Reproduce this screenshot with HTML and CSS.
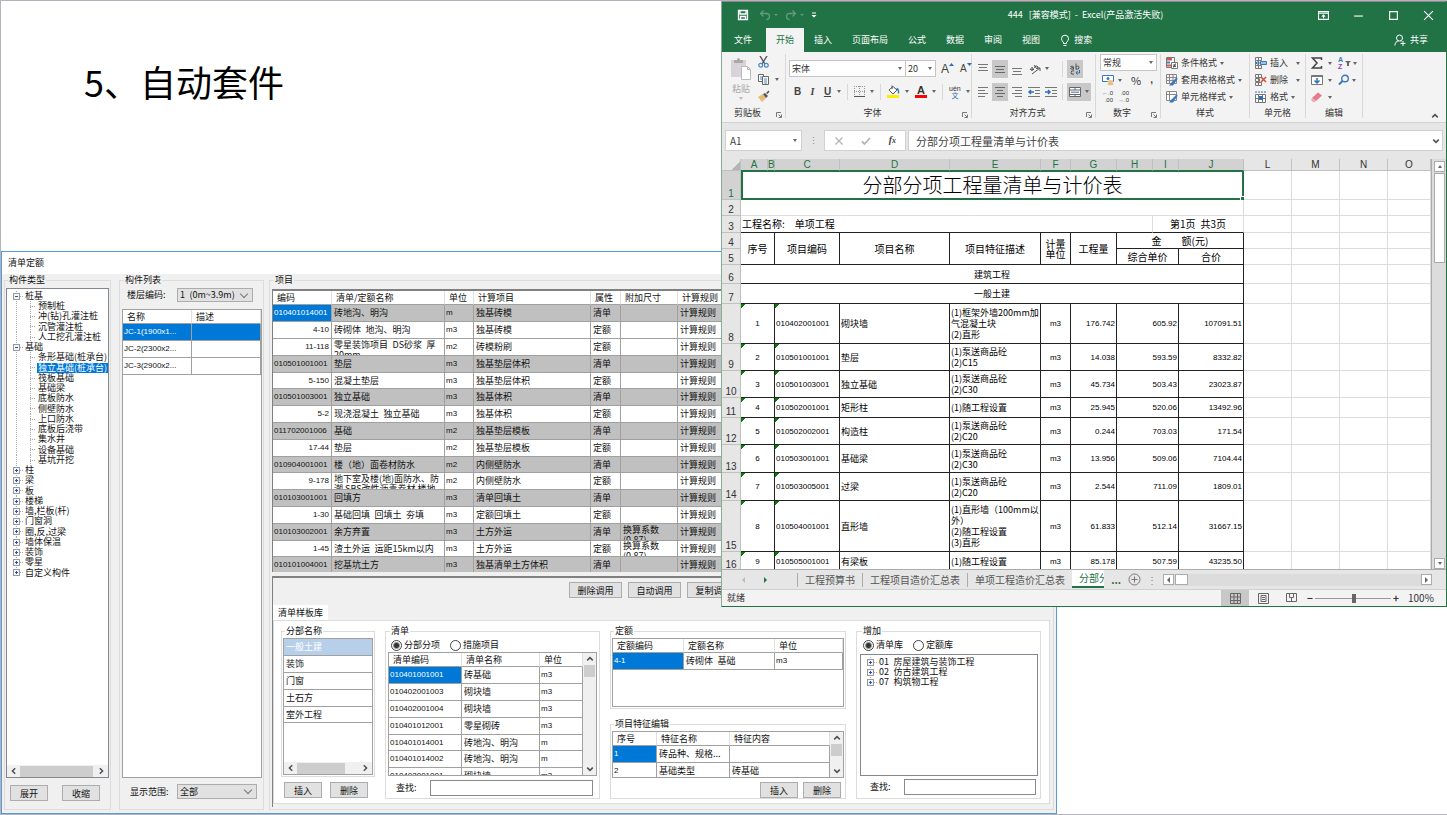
FILE: index.html
```html
<!DOCTYPE html>
<html lang="zh-CN">
<head>
<meta charset="utf-8">
<title>自动套件</title>
<link rel="stylesheet" href="styles.css">
</head>
<body>
<svg class="defs" aria-hidden="true">
  <symbol id="plus" viewBox="0 0 7 7"><rect x=".5" y=".5" width="6" height="6" fill="#f4f4f4" stroke="#9a9a9a"/><path d="M2 3.5h3M3.5 2v3" stroke="#2b50b5"/></symbol>
  <symbol id="minus" viewBox="0 0 7 7"><rect x=".5" y=".5" width="6" height="6" fill="#f4f4f4" stroke="#9a9a9a"/><path d="M2 3.5h3" stroke="#2b50b5"/></symbol>
  <symbol id="chl" viewBox="0 0 8 8"><path d="M5.2 1.2 2.4 4l2.8 2.8" fill="none" stroke="#505050" stroke-width="1.5"/></symbol>
  <symbol id="chr" viewBox="0 0 8 8"><path d="M2.8 1.2 5.6 4 2.8 6.8" fill="none" stroke="#505050" stroke-width="1.5"/></symbol>
  <symbol id="chu" viewBox="0 0 8 8"><path d="M1.2 5.4 4 2.6l2.8 2.8" fill="none" stroke="#505050" stroke-width="1.5"/></symbol>
  <symbol id="chd" viewBox="0 0 8 8"><path d="M1.2 2.6 4 5.4l2.8-2.8" fill="none" stroke="#505050" stroke-width="1.5"/></symbol>
  <symbol id="launch" viewBox="0 0 6 6"><path d="M.5 5V.5H5M2.5 2.5 5 5M5.5 2.5v3h-3" fill="none" stroke="#777"/></symbol>
</svg>
<main class="slide">
<h1 class="headline">5、自动套件</h1>

<section class="dialog">
  <header class="dialog-title">清单定额</header>
  <div class="dialog-body">
    <fieldset class="group g-types">
      <legend>构件类型</legend>
      <div class="treebox grow">
        <ul class="tree">
          <li><svg><use href="#minus"/></svg><span>桩基</span></li>
          <li class="leaf"><span>预制桩</span></li>
          <li class="leaf"><span>冲(钻)孔灌注桩</span></li>
          <li class="leaf"><span>沉管灌注桩</span></li>
          <li class="leaf"><span>人工挖孔灌注桩</span></li>
          <li><svg><use href="#minus"/></svg><span>基础</span></li>
          <li class="leaf"><span>条形基础(桩承台)</span></li>
          <li class="leaf"><span class="on">独立基础(桩承台)</span></li>
          <li class="leaf"><span>筏板基础</span></li>
          <li class="leaf"><span>基础梁</span></li>
          <li class="leaf"><span>底板防水</span></li>
          <li class="leaf"><span>侧壁防水</span></li>
          <li class="leaf"><span>上口防水</span></li>
          <li class="leaf"><span>底板后浇带</span></li>
          <li class="leaf"><span>集水井</span></li>
          <li class="leaf"><span>设备基础</span></li>
          <li class="leaf"><span>基坑开挖</span></li>
          <li><svg><use href="#plus"/></svg><span>柱</span></li>
          <li><svg><use href="#plus"/></svg><span>梁</span></li>
          <li><svg><use href="#plus"/></svg><span>板</span></li>
          <li><svg><use href="#plus"/></svg><span>楼梯</span></li>
          <li><svg><use href="#plus"/></svg><span>墙,栏板(杆)</span></li>
          <li><svg><use href="#plus"/></svg><span>门窗洞</span></li>
          <li><svg><use href="#plus"/></svg><span>圈,反,过梁</span></li>
          <li><svg><use href="#plus"/></svg><span>墙体保温</span></li>
          <li><svg><use href="#plus"/></svg><span>装饰</span></li>
          <li><svg><use href="#plus"/></svg><span>零星</span></li>
          <li class="last"><svg><use href="#plus"/></svg><span>自定义构件</span></li>
        </ul>
        <div class="hbar"><svg><use href="#chl"/></svg><i class="thumb"></i><svg><use href="#chr"/></svg></div>
      </div>
      <div class="btns types-btns"><button>展开</button><button>收缩</button></div>
    </fieldset>

    <fieldset class="group g-list">
      <legend>构件列表</legend>
      <div class="field top"><label for="floor">楼层编码:</label><span class="sel"><select id="floor"><option>1&ensp;(0m~3.9m)</option></select></span></div>
      <div class="box grow">
        <table class="grid parts">
          <colgroup><col class="w69"><col></colgroup>
          <thead><tr><th>名称</th><th>描述</th></tr></thead>
          <tbody>
            <tr class="on"><td class="c">JC-1(1900x1...</td><td></td></tr>
            <tr><td class="c">JC-2(2300x2...</td><td></td></tr>
            <tr><td class="c">JC-3(2900x2...</td><td></td></tr>
          </tbody>
        </table>
      </div>
      <div class="field bottom"><label for="range">显示范围:</label><span class="sel"><select id="range"><option>全部</option></select></span></div>
    </fieldset>

    <fieldset class="group g-items">
      <legend>项目</legend>
      <div class="items">
        <table class="grid quota">
          <colgroup><col class="w59"><col class="w113"><col class="w29"><col class="w117"><col class="w30"><col class="w57"><col></colgroup>
          <thead><tr><th>编码</th><th>清单/定额名称</th><th>单位</th><th>计算项目</th><th>属性</th><th>附加尺寸</th><th>计算规则</th></tr></thead>
          <tbody>
            <tr class="g"><td class="c cur">010401014001</td><td>砖地沟、明沟</td><td class="u">m</td><td>独基砖模</td><td>清单</td><td></td><td>计算规则</td></tr>
            <tr><td class="c r">4-10</td><td>砖砌体&ensp;地沟、明沟</td><td class="u">m3</td><td>独基砖模</td><td>定额</td><td></td><td>计算规则</td></tr>
            <tr><td class="c r">11-118</td><td><div class="clip">零星装饰项目&ensp;DS砂浆&ensp;厚<br>20mm</div></td><td class="u">m2</td><td>砖模粉刷</td><td>定额</td><td></td><td>计算规则</td></tr>
            <tr class="g"><td class="c">010501001001</td><td>垫层</td><td class="u">m3</td><td>独基垫层体积</td><td>清单</td><td></td><td>计算规则</td></tr>
            <tr><td class="c r">5-150</td><td>混凝土垫层</td><td class="u">m3</td><td>独基垫层体积</td><td>定额</td><td></td><td>计算规则</td></tr>
            <tr class="g"><td class="c">010501003001</td><td>独立基础</td><td class="u">m3</td><td>独基体积</td><td>清单</td><td></td><td>计算规则</td></tr>
            <tr><td class="c r">5-2</td><td>现浇混凝土&ensp;独立基础</td><td class="u">m3</td><td>独基体积</td><td>定额</td><td></td><td>计算规则</td></tr>
            <tr class="g"><td class="c">011702001006</td><td>基础</td><td class="u">m2</td><td>独基垫层模板</td><td>清单</td><td></td><td>计算规则</td></tr>
            <tr><td class="c r">17-44</td><td>垫层</td><td class="u">m2</td><td>独基垫层模板</td><td>定额</td><td></td><td>计算规则</td></tr>
            <tr class="g"><td class="c">010904001001</td><td>楼（地）面卷材防水</td><td class="u">m2</td><td>内侧壁防水</td><td>清单</td><td></td><td>计算规则</td></tr>
            <tr><td class="c r">9-178</td><td><div class="clip">地下室及楼(地)面防水、防<br>潮 SBS改性沥青卷材 楼地</div></td><td class="u">m2</td><td>内侧壁防水</td><td>定额</td><td></td><td>计算规则</td></tr>
            <tr class="g"><td class="c">010103001001</td><td>回填方</td><td class="u">m3</td><td>清单回填土</td><td>清单</td><td></td><td>计算规则</td></tr>
            <tr><td class="c r">1-30</td><td>基础回填&ensp;回填土&ensp;夯填</td><td class="u">m3</td><td>定额回填土</td><td>定额</td><td></td><td>计算规则</td></tr>
            <tr class="g"><td class="c">010103002001</td><td>余方弃置</td><td class="u">m3</td><td>土方外运</td><td>清单</td><td><div class="clip">换算系数<br>(0.87)</div></td><td>计算规则</td></tr>
            <tr><td class="c r">1-45</td><td>渣土外运&ensp;运距15km以内</td><td class="u">m3</td><td>土方外运</td><td>定额</td><td><div class="clip">换算系数<br>(0.87)</div></td><td>计算规则</td></tr>
            <tr class="g"><td class="c">010101004001</td><td>挖基坑土方</td><td class="u">m3</td><td>独基清单土方体积</td><td>清单</td><td></td><td>计算规则</td></tr>
          </tbody>
        </table>
      </div>
      <div class="lower">
        <div class="btns calls"><button>删除调用</button><button>自动调用</button><button>复制调用</button></div>
        <div class="tabs"><button class="tab">清单样板库</button></div>
        <div class="page">
          <div class="col">
            <fieldset class="group g-div grow">
              <legend>分部名称</legend>
              <div class="box grow">
                <ul class="rows grow"><li class="on">一般土建</li><li>装饰</li><li>门窗</li><li>土石方</li><li>室外工程</li></ul>
                <div class="hbar"><svg><use href="#chl"/></svg><i class="thumb half"></i><svg><use href="#chr"/></svg></div>
              </div>
            </fieldset>
            <div class="btns div-btns"><button>插入</button><button>删除</button></div>
          </div>
          <fieldset class="group g-bill">
            <legend>清单</legend>
            <div class="radios"><label><input type="radio" name="bill" checked>分部分项</label><label><input type="radio" name="bill">措施项目</label></div>
            <div class="box scroll grow">
              <div class="pane">
                <table class="grid">
                  <colgroup><col class="w73"><col class="w78"><col></colgroup>
                  <thead><tr><th>清单编码</th><th>清单名称</th><th>单位</th></tr></thead>
                  <tbody>
                    <tr><td class="c cur">010401001001</td><td>砖基础</td><td class="u">m3</td></tr>
                    <tr><td class="c">010402001003</td><td>砌块墙</td><td class="u">m3</td></tr>
                    <tr><td class="c">010402001004</td><td>砌块墙</td><td class="u">m3</td></tr>
                    <tr><td class="c">010401012001</td><td>零星砌砖</td><td class="u">m3</td></tr>
                    <tr><td class="c">010401014001</td><td>砖地沟、明沟</td><td class="u">m</td></tr>
                    <tr><td class="c">010401014002</td><td>砖地沟、明沟</td><td class="u">m</td></tr>
                    <tr><td class="c">010402001001</td><td>砌块墙</td><td class="u">m3</td></tr>
                  </tbody>
                </table>
              </div>
              <div class="vbar"><svg><use href="#chu"/></svg><i class="thumb"></i><svg><use href="#chd"/></svg></div>
            </div>
            <div class="field find"><label for="find1">查找:</label><input id="find1" type="text"></div>
          </fieldset>
          <div class="col mid">
            <fieldset class="group g-quota">
              <legend>定额</legend>
              <div class="box grow">
                <table class="grid">
                  <colgroup><col class="w71"><col class="w91"><col></colgroup>
                  <thead><tr><th>定额编码</th><th>定额名称</th><th>单位</th></tr></thead>
                  <tbody><tr><td class="c cur">4-1</td><td>砖砌体&ensp;基础</td><td class="u">m3</td></tr></tbody>
                </table>
              </div>
            </fieldset>
            <fieldset class="group g-feat grow">
              <legend>项目特征编辑</legend>
              <div class="box scroll grow">
                <div class="pane">
                  <table class="grid">
                    <colgroup><col class="w44"><col class="w73"><col></colgroup>
                    <thead><tr><th>序号</th><th>特征名称</th><th>特征内容</th></tr></thead>
                    <tbody>
                      <tr><td class="c cur">1</td><td>砖品种、规格...</td><td></td></tr>
                      <tr><td class="c">2</td><td>基础类型</td><td>砖基础</td></tr>
                    </tbody>
                  </table>
                </div>
                <div class="vbar"><svg><use href="#chu"/></svg><i class="thumb"></i><svg><use href="#chd"/></svg></div>
              </div>
              <div class="btns feat-btns"><button>插入</button><button>删除</button></div>
            </fieldset>
          </div>
          <fieldset class="group g-add">
            <legend>增加</legend>
            <div class="radios"><label><input type="radio" name="lib" checked>清单库</label><label><input type="radio" name="lib">定额库</label></div>
            <div class="treebox grow">
              <ul class="tree">
                <li><svg><use href="#plus"/></svg><span>01&ensp;房屋建筑与装饰工程</span></li>
                <li><svg><use href="#plus"/></svg><span>02&ensp;仿古建筑工程</span></li>
                <li class="last"><svg><use href="#plus"/></svg><span>07&ensp;构筑物工程</span></li>
              </ul>
            </div>
            <div class="field find"><label for="find2">查找:</label><input id="find2" type="text"></div>
          </fieldset>
        </div>
      </div>
    </fieldset>
  </div>
</section>

<section class="excel">
  <header class="xtitle">
    <div class="quick">
      <svg width="12" height="12" viewBox="0 0 12 12"><path d="M1.5 1.5h9v9h-9zM3 1.5v3.5h6V1.5M3.5 10.5V7.5h5v3" fill="none" stroke="#fff" stroke-width="1.3"/></svg>
      <svg class="undo" width="20" height="12" viewBox="0 0 20 12"><path d="M4.5 1.5 1.5 4.5l3 3M1.5 4.5h6q3 0 3 3t-3 3" fill="none" stroke="#5f9c7a" stroke-width="1.3"/><path d="M15 5h4l-2 2z" fill="#5f9c7a"/></svg>
      <svg width="20" height="12" viewBox="0 0 20 12"><path d="M7.500 1.5l3 3-3 3M10.500 4.500h-6q-3 0-3 3t3 3" fill="none" stroke="#5f9c7a" stroke-width="1.3"/><path d="M15 5h4l-2 2z" fill="#5f9c7a"/></svg>
      <svg width="6" height="8" viewBox="0 0 6 8"><path d="M1 2h4" stroke="#fff"/><path d="M.500 4h5L3 6.500z" fill="#fff"/></svg>
    </div>
    <div class="xname">444&nbsp;&nbsp; [兼容模式]&nbsp; -&nbsp; Excel(产品激活失败)</div>
    <div class="winbtns">
      <svg viewBox="0 0 10 10"><path d="M.500 1.500h9v7h-9zM.500 3h9M5 7.500V4.500M3.500 6 5 4.500 6.500 6" fill="none" stroke="#fff"/></svg>
      <svg viewBox="0 0 10 10"><path d="M1 5.500h8" stroke="#fff"/></svg>
      <svg viewBox="0 0 10 10"><path d="M1.500 1.500h7v7h-7z" fill="none" stroke="#fff"/></svg>
      <svg viewBox="0 0 10 10"><path d="m1 1 8 8M9 1 1 9" stroke="#fff"/></svg>
    </div>
  </header>
  <nav class="xtabs">
    <button class="file">文件</button><button class="on">开始</button><button>插入</button><button>页面布局</button><button>公式</button><button>数据</button><button>审阅</button><button>视图</button>
    <button class="search"><svg width="10" height="13" viewBox="0 0 10 13"><path d="M3.500 9.500V8.200Q1.500 7 1.500 4.700a3.500 3.500 0 0 1 7 0Q8.500 7 6.500 8.200v1.300zM3.500 11.500h3" fill="none" stroke="#fff"/></svg>搜索</button>
    <button class="share"><svg width="12" height="12" viewBox="0 0 12 12"><circle cx="5.500" cy="4" r="3" fill="none" stroke="#fff"/><path d="M.800 11.500Q1.500 7 4.500 7M6.500 7l1 .800M9 7v5M6.500 9.500h5" fill="none" stroke="#fff"/></svg>共享</button>
  </nav>

  <div class="ribbon">
    <div class="rg rg-clip">
      <div class="tools clip-tools">
        <div class="paste">
          <svg width="22" height="24" viewBox="0 0 22 24"><path d="M1 3h15v17H1z" fill="#d9d3d9"/><path d="M4 3h3q0-2 1.500-2T10 3h3v3H4z" fill="#a9a9a9"/><path d="M11.500 9.500h6l3 3v10h-9z" fill="#fff" stroke="#bbb"/><path d="M17.500 9.500v3h3" fill="none" stroke="#bbb"/></svg>
          <span>粘贴</span><i class="car dim"></i>
        </div>
        <div class="stack">
          <svg width="11" height="12" viewBox="0 0 11 12"><path d="M2 0l5 8M9 0 4 8" stroke="#555" stroke-width="1.400"/><circle cx="2.700" cy="9.300" r="1.900" fill="none" stroke="#4a86c5" stroke-width="1.200"/><circle cx="8.300" cy="9.300" r="1.900" fill="none" stroke="#4a86c5" stroke-width="1.200"/></svg>
          <span class="ico"><svg width="11" height="12" viewBox="0 0 11 12"><path d="M.500 1.500h5v7h-5z" fill="#fff" stroke="#666"/><path d="M4.500 3.500h6v8h-6z" fill="#fff" stroke="#666"/><path d="M2 4h2M2 6h2M6 6h3M6 8h3M6 10h3" stroke="#4a86c5"/></svg><i class="car"></i></span>
          <svg width="12" height="12" viewBox="0 0 12 12"><path d="M0 7 5 4l3 4-4 4z" fill="#eab878"/><path d="m5 4 2-1 3 3-2 2z" fill="#555"/><path d="m8 3 2.500-2.500 1 1L9.500 4z" fill="#555"/></svg>
        </div>
      </div>
      <div class="rlabel">剪贴板<svg><use href="#launch"/></svg></div>
    </div>
    <div class="rg rg-font">
      <div class="tools two">
        <div class="trow">
          <span class="sel tri fname"><select aria-label="字体"><option>宋体</option></select></span><span class="sel tri fsize"><select aria-label="字号"><option>20</option></select></span>
          <b class="big">A<svg width="5" height="4" viewBox="0 0 5 4"><path d="M0 3h5L2.500 0z" fill="#2f6fb7"/></svg></b>
          <b class="small">A<svg width="5" height="4" viewBox="0 0 5 4"><path d="M0 0h5L2.500 3z" fill="#2f6fb7"/></svg></b>
        </div>
        <div class="trow fonts2">
          <b>B</b><b class="it">I</b><span class="ico"><b class="un">U</b><i class="car"></i></span><i class="vs"></i>
          <span class="ico"><svg width="11" height="11" viewBox="0 0 11 11"><path d="M.500 0v10M5.500 0v10M10.500 0v10M0 .500h11M0 5.500h11" stroke="#999" stroke-dasharray="1 1"/><path d="M0 10.500h11" stroke="#555"/></svg><i class="car"></i></span><i class="vs"></i>
          <span class="ico"><svg width="13" height="13" viewBox="0 0 13 13"><path d="m2 5 4-3.500L10 5 6 9z" fill="#fff" stroke="#555"/><path d="M5 4V.500" stroke="#555"/><path d="M9.500 3.500q2.500.500 2 5" fill="none" stroke="#3b78bd" stroke-width="1.500"/><path d="M0 10h12v3H0z" fill="#ffec00"/></svg><i class="car"></i></span>
          <span class="ico"><span class="acol">A</span><i class="car"></i></span><i class="vs"></i>
          <span class="ico"><span class="pin"><em>uén</em><em class="wen">文</em></span><i class="car"></i></span>
        </div>
      </div>
      <div class="rlabel">字体<svg><use href="#launch"/></svg></div>
    </div>
    <div class="rg rg-align">
      <div class="tools two">
        <div class="trow al">
          <button class="tb"><svg viewBox="0 0 12 12"><path d="M1 1.500h10M2 4.500h8M1 7.500h10" stroke="#777"/></svg></button>
          <button class="tb on"><svg viewBox="0 0 12 12"><path d="M1 3.500h10M2 6.500h8M1 9.500h10" stroke="#666"/></svg></button>
          <button class="tb"><svg viewBox="0 0 12 12"><path d="M1 5.500h10M2 8.500h8M1 11.500h10" stroke="#777"/></svg></button>
          <span class="ico turn"><svg viewBox="0 0 12 12"><path d="M1 7q2-4 3-2t-2 2q2 1 3-1M5 2l3 4q2-2 0-3T5.500 5M3 11l8-6M11 5v3M11 5H8" fill="none" stroke="#555"/></svg><i class="car"></i></span><i class="vs"></i>
          <button class="tb on"><svg viewBox="0 0 12 12"><path d="M1.500 3.500q3-1 3 .500v2.500M4.500 4.500q-3 0-3 1t3 .500M7 .500v6M7 4q3-2 3 .500T7 6M5 8q-3-1-3 1.500T5 11" fill="none" stroke="#555"/><path d="M10.500 7v3H7M8.500 8 7 10l1.500 1.500" fill="none" stroke="#2f6fb7"/></svg></button>
        </div>
        <div class="trow al">
          <button class="tb"><svg viewBox="0 0 12 12"><path d="M1 1.500h10M1 4.500h7M1 7.500h10M1 10.500h7" stroke="#777"/></svg></button>
          <button class="tb on"><svg viewBox="0 0 12 12"><path d="M1 1.500h10M3 4.500h6M1 7.500h10M3 10.500h6" stroke="#666"/></svg></button>
          <button class="tb"><svg viewBox="0 0 12 12"><path d="M1 1.500h10M4 4.500h7M1 7.500h10M4 10.500h7" stroke="#777"/></svg></button>
          <button class="tb"><svg viewBox="0 0 12 12"><path d="M0 1.500h12M7 4.500h5M7 7.500h5M0 10.500h12" stroke="#777"/><path d="M6 6H1M3 4 1 6l2 2" fill="none" stroke="#2f6fb7" stroke-width="1.500"/></svg></button>
          <button class="tb"><svg viewBox="0 0 12 12"><path d="M0 1.500h12M7 4.500h5M7 7.500h5M0 10.500h12" stroke="#777"/><path d="M0 6h5M3 4l2 2-2 2" fill="none" stroke="#2f6fb7" stroke-width="1.500"/></svg></button><i class="vs"></i>
          <button class="tb on wide"><svg viewBox="0 0 12 12"><path d="M.500 1.500h11v9H.500zM.500 4h11M.500 8.500h11M6 1.500V4M6 8.500v2" fill="#fff" stroke="#666"/><path d="M2 6.200h8" stroke="#2f6fb7"/></svg><i class="car"></i></button>
        </div>
      </div>
      <div class="rlabel">对齐方式<svg><use href="#launch"/></svg></div>
    </div>
    <div class="rg rg-num">
      <div class="tools">
        <span class="sel tri nfmt"><select aria-label="数字格式"><option>常规</option></select></span>
        <div class="trow n2"><span class="ico"><svg viewBox="0 0 12 12"><path d="M.500 1.500h11v6H.500z" fill="#fff" stroke="#3b78bd"/><circle cx="6" cy="4.500" r="1.500" fill="#3b78bd"/><ellipse cx="8.500" cy="7.500" rx="3" ry="1.300" fill="#eab878"/><ellipse cx="8.500" cy="10" rx="3" ry="1.300" fill="#eab878"/></svg><i class="car"></i></span><span class="pct">%</span><b>,</b></div>
        <div class="trow n3"><span class="dec"><em><i>←</i>.0</em><em>.00</em></span><span class="dec"><em>.00</em><em><i>→</i>.0</em></span></div>
      </div>
      <div class="rlabel">数字<svg><use href="#launch"/></svg></div>
    </div>
    <div class="rg rg-style">
      <div class="tools lines">
        <button><svg viewBox="0 0 12 12"><path d="M.500.500h8v10h-8z" fill="#fff" stroke="#777"/><path d="M1 1h5v2.500H1z" fill="#d9534f"/><path d="M1 4.500h3v2H1z" fill="#3b78bd"/><path d="M1 7.500h4v2H1z" fill="#d9534f"/><path d="M5.500 5.500h6v6h-6z" fill="#fff" stroke="#777"/><path d="M7 8h3M7 9.500h3M9.500 6.500l-2 4" stroke="#555"/></svg>条件格式<i class="car"></i></button>
        <button><svg viewBox="0 0 12 12"><path d="M.500.500h10v9H.500zM.500 3.500h10M.500 6.500h10M3.500.500v9M7 .500v9" fill="none" stroke="#888"/><path d="m11 3-5 5-3 3.500h4L11.500 5z" fill="#3b78bd"/></svg>套用表格格式<i class="car"></i></button>
        <button><svg viewBox="0 0 12 12"><path d="M.500.500h10v9H.500zM.500 3.500h10M3.500.500v9" fill="#fff" stroke="#888"/><path d="m11 3-5 5-3 3.500h4L11.500 5z" fill="#3b78bd"/></svg>单元格样式<i class="car"></i></button>
      </div>
      <div class="rlabel">样式</div>
    </div>
    <div class="rg rg-cells">
      <div class="tools lines">
        <button><svg viewBox="0 0 12 12"><path d="M.500.500h6v3h-6zM.500 8.500h6v3h-6zM3.500.500v11M.500 3.500v5" fill="none" stroke="#777"/><path d="M5.500 4.500h6v3h-6z" fill="#9fc3e8" stroke="#3b78bd"/><path d="M5 6H1M2.500 4.500 1 6l1.500 1.500" fill="none" stroke="#2f6fb7"/></svg>插入<i class="car far"></i></button>
        <button><svg viewBox="0 0 12 12"><path d="M.500.500h6v3h-6zM.500 8.500h6v3h-6zM3.500.500v11M.500 4.500h4v3h-4z" fill="none" stroke="#777"/><path d="m6 3 5 5M11 3 6 8" stroke="#e0482f" stroke-width="1.500"/></svg>删除<i class="car far"></i></button>
        <button><svg viewBox="0 0 12 12"><path d="M.500 3.500h10v8H.500zM3.500 3.500v8M7.500 3.500v8M.500 7.500h10" fill="#fff" stroke="#777"/><path d="M0 1h11" stroke="#2f6fb7" stroke-dasharray="2 1"/><path d="M4 5h4v4H4z" fill="#2f6fb7"/></svg>格式<i class="car"></i></button>
      </div>
      <div class="rlabel">单元格</div>
    </div>
    <div class="rg rg-edit">
      <div class="tools lines">
        <div class="pair"><span class="ico"><svg viewBox="0 0 12 12"><path d="M10.500 3V1H1.500l4.500 5-4.500 5h9V9" fill="none" stroke="#444" stroke-width="1.500"/></svg><i class="car"></i></span><span class="ico"><span class="az"><em>A</em><em>Z</em></span><svg class="fun" viewBox="0 0 6 6"><path d="M0 1h6L4 3v3H2V3z" fill="#666"/></svg><i class="car"></i></span></div>
        <div class="pair"><span class="ico"><svg viewBox="0 0 12 12"><path d="M.500 1.500h11v9H.500z" fill="#fff" stroke="#777"/><path d="M.500 2h11" stroke="#777" stroke-width="2"/><path d="M6 4v5M3.500 6.500 6 9l2.500-2.500" fill="none" stroke="#2f6fb7" stroke-width="1.500"/></svg><i class="car"></i></span><span class="ico"><svg viewBox="0 0 12 12"><circle cx="7" cy="4.500" r="3.300" fill="none" stroke="#3b78bd" stroke-width="1.400"/><path d="M4.500 7 1 10.500" stroke="#3b78bd" stroke-width="2"/></svg><i class="car"></i></span></div>
        <div class="pair"><span class="ico"><svg viewBox="0 0 12 12"><path d="m1 7 6-5.500 4 3L5 10z" fill="#e8788c"/><path d="m1 7 4 3-1 1H2L0 9z" fill="#f2a9b5"/></svg><i class="car"></i></span></div>
      </div>
      <div class="rlabel">编辑</div>
    </div>
    <div class="rg-end"><svg width="8" height="8"><use href="#chu"/></svg></div>
  </div>

  <div class="fbar">
    <div class="namebox"><span>A1</span><i class="car"></i></div>
    <span class="dots">⋮</span>
    <div class="fbtns">
      <svg viewBox="0 0 10 10"><path d="m1.500 1.500 7 7M8.500 1.500l-7 7" stroke="#b5b5b5" stroke-width="1.300"/></svg>
      <svg viewBox="0 0 10 10"><path d="M1 5.500 3.500 8 9 2" fill="none" stroke="#b5b5b5" stroke-width="1.800"/></svg>
      <i>f<small>x</small></i>
    </div>
    <div class="ftext"><span>分部分项工程量清单与计价表</span><svg width="8" height="8"><use href="#chd"/></svg></div>
  </div>

  <div class="sheet">
    <div class="cells">
      <table class="xs">
        <colgroup><col class="w19"><col class="w27"><col class="w7"><col class="w65"><col class="w110"><col class="w91"><col class="w30"><col class="w46"><col class="w36"><col class="w26"><col class="w65"><col class="w48"><col class="w48"><col class="w48"><col></colgroup>
        <thead><tr><th class="corner"></th><th class="s">A</th><th class="s">B</th><th class="s">C</th><th class="s">D</th><th class="s">E</th><th class="s">F</th><th class="s">G</th><th class="s">H</th><th class="s">I</th><th class="s">J</th><th>L</th><th>M</th><th>N</th><th>O</th></tr></thead>
        <tbody>
          <tr class="h29"><th class="s">1</th><td class="title" colspan="10">分部分项工程量清单与计价表<i class="handle"></i></td><td></td><td></td><td></td><td></td></tr>
          <tr class="h16"><th>2</th><td colspan="10"></td><td></td><td></td><td></td><td></td></tr>
          <tr class="h17"><th>3</th><td class="k0 h l" colspan="8">工程名称:&ensp;&ensp;单项工程</td><td class="k0 h" colspan="2">第1页&ensp;共3页</td><td></td><td></td><td></td><td></td></tr>
          <tr class="h16"><th>4</th><td class="k h" colspan="2" rowspan="2">序号</td><td class="k h" rowspan="2">项目编码</td><td class="k h" rowspan="2">项目名称</td><td class="k h" rowspan="2">项目特征描述</td><td class="k h" rowspan="2">计量<br>单位</td><td class="k h" rowspan="2">工程量</td><td class="k h" colspan="3">金&emsp;&emsp;额(元)</td><td></td><td></td><td></td><td></td></tr>
          <tr class="h16"><th>5</th><td class="k h" colspan="2">综合单价</td><td class="k h">合价</td><td></td><td></td><td></td><td></td></tr>
          <tr class="h19"><th>6</th><td class="k" colspan="10">建筑工程</td><td></td><td></td><td></td><td></td></tr>
          <tr class="h20"><th>7</th><td class="k" colspan="10">一般土建</td><td></td><td></td><td></td><td></td></tr>
          <tr class="h40"><th>8</th><td class="k n t" colspan="2">1</td><td class="k n t l">010402001001</td><td class="k l">砌块墙</td><td class="k l">(1)框架外墙200mm加<br>气混凝土块<br>(2)直形</td><td class="k n">m3</td><td class="k n r">176.742</td><td class="k n r" colspan="2">605.92</td><td class="k n r">107091.51</td><td></td><td></td><td></td><td></td></tr>
          <tr class="h27"><th>9</th><td class="k n t" colspan="2">2</td><td class="k n t l">010501001001</td><td class="k l">垫层</td><td class="k l">(1)泵送商品砼<br>(2)C15</td><td class="k n">m3</td><td class="k n r">14.038</td><td class="k n r" colspan="2">593.59</td><td class="k n r">8332.82</td><td></td><td></td><td></td><td></td></tr>
          <tr class="h27"><th>10</th><td class="k n t" colspan="2">3</td><td class="k n t l">010501003001</td><td class="k l">独立基础</td><td class="k l">(1)泵送商品砼<br>(2)C30</td><td class="k n">m3</td><td class="k n r">45.734</td><td class="k n r" colspan="2">503.43</td><td class="k n r">23023.87</td><td></td><td></td><td></td><td></td></tr>
          <tr class="h20"><th>11</th><td class="k n t" colspan="2">4</td><td class="k n t l">010502001001</td><td class="k l">矩形柱</td><td class="k l">(1)随工程设置</td><td class="k n">m3</td><td class="k n r">25.945</td><td class="k n r" colspan="2">520.06</td><td class="k n r">13492.96</td><td></td><td></td><td></td><td></td></tr>
          <tr class="h27"><th>12</th><td class="k n t" colspan="2">5</td><td class="k n t l">010502002001</td><td class="k l">构造柱</td><td class="k l">(1)泵送商品砼<br>(2)C20</td><td class="k n">m3</td><td class="k n r">0.244</td><td class="k n r" colspan="2">703.03</td><td class="k n r">171.54</td><td></td><td></td><td></td><td></td></tr>
          <tr class="h28"><th>13</th><td class="k n t" colspan="2">6</td><td class="k n t l">010503001001</td><td class="k l">基础梁</td><td class="k l">(1)泵送商品砼<br>(2)C30</td><td class="k n">m3</td><td class="k n r">13.956</td><td class="k n r" colspan="2">509.06</td><td class="k n r">7104.44</td><td></td><td></td><td></td><td></td></tr>
          <tr class="h28"><th>14</th><td class="k n t" colspan="2">7</td><td class="k n t l">010503005001</td><td class="k l">过梁</td><td class="k l">(1)泵送商品砼<br>(2)C20</td><td class="k n">m3</td><td class="k n r">2.544</td><td class="k n r" colspan="2">711.09</td><td class="k n r">1809.01</td><td></td><td></td><td></td><td></td></tr>
          <tr class="h51"><th>15</th><td class="k n t" colspan="2">8</td><td class="k n t l">010504001001</td><td class="k l">直形墙</td><td class="k l">(1)直形墙（100mm以<br>外）<br>(2)随工程设置<br>(3)直形</td><td class="k n">m3</td><td class="k n r">61.833</td><td class="k n r" colspan="2">512.14</td><td class="k n r">31667.15</td><td></td><td></td><td></td><td></td></tr>
          <tr class="h19"><th>16</th><td class="k n t" colspan="2">9</td><td class="k n t l">010505001001</td><td class="k l">有梁板</td><td class="k l">(1)随工程设置</td><td class="k n">m3</td><td class="k n r">85.178</td><td class="k n r" colspan="2">507.59</td><td class="k n r">43235.50</td><td></td><td></td><td></td><td></td></tr>
        </tbody>
      </table>
    </div>
    <div class="xv"><span class="ab"><i class="up"></i></span><i class="xthumb"></i><span class="ab end"><i class="dn"></i></span></div>
  </div>

  <div class="xsheets">
    <span class="nav"><i class="lt"></i><i class="rt"></i></span>
    <button>工程预算书</button><button>工程项目造价汇总表</button><button>单项工程造价汇总表</button><button class="on">分部分</button>
    <b class="more">...</b>
    <svg width="13" height="13" viewBox="0 0 13 13"><circle cx="6.500" cy="6.500" r="5.500" fill="none" stroke="#777"/><path d="M3.500 6.500h6M6.500 3.500v6" stroke="#777"/></svg>
    <span class="dots">⋮</span>
    <div class="xh"><span class="ab"><i class="lt"></i></span><i class="xthumb"></i><span class="ab end"><i class="rt"></i></span></div>
  </div>
  <footer class="xstatus">
    <span class="ready">就绪</span>
    <button class="on"><svg viewBox="0 0 11 11"><path d="M.500.500h10v10H.500zM.500 4h10M.500 7.500h10M4 .500v10M7.500.500v10" fill="none" stroke="#666"/></svg></button>
    <button><svg viewBox="0 0 11 11"><path d="M.500.500h10v10H.500zM3 2.500h5v6H3zM4 4.500h3M4 6.500h3" fill="none" stroke="#666"/></svg></button>
    <button><svg viewBox="0 0 11 11"><path d="M.500.500h10v8H.500zM3.500.500v4h4v-4M5.500 4.500v4" fill="none" stroke="#666"/></svg></button>
    <b class="pm">−</b><input type="range" aria-label="缩放" value="51"><b class="pm">+</b><span class="pc">100%</span>
  </footer>
</section>
</main>
</body>
</html>
```
FILE: styles.css
```css
* { box-sizing: border-box; }
body { margin: 0; background: #fff; color: #111; font: 9px/10px "Noto Sans CJK SC", sans-serif; }
button, input, select { font: inherit; color: inherit; margin: 0; padding: 0; border: 0; border-radius: 0; background: none; }
button { white-space: nowrap; }
ul { list-style: none; margin: 0; padding: 0; }
h1 { margin: 0; font-weight: 400; }
em, i { font-style: normal; }
svg { display: block; flex: none; }
.defs { position: absolute; width: 0; height: 0; }
.grow { flex: 1; min-height: 0; }

.slide { position: relative; height: 100vh; min-height: 815px; overflow: hidden; border: 1px solid #b4b2bc; border-right: 0; }
.headline { padding: 56px 0 0 83px; font-size: 36px; line-height: 48px; color: #000; }

/* quota dialog */
.dialog { position: absolute; left: 0; top: 250px; bottom: 0; width: 1056px; display: flex; flex-direction: column; border: 1px solid #5b9bd5; background: #f0f0f0; }
.dialog-title { height: 22px; padding-left: 6px; background: #fff; line-height: 22px; }
.dialog-body { flex: 1; min-height: 0; display: grid; grid-template-columns: 107px 145px minmax(0, 1fr); grid-template-rows: minmax(0, 1fr); column-gap: 8px; padding: 0 2px 3px 2px; }
.group { display: flex; flex-direction: column; min-width: 0; min-height: 0; margin: 0; padding: 2px 2px 2px 1px; border: 1px solid #dcdcdc; }
.group legend { margin-left: 2px; padding: 0 1px; line-height: 12px; }
.box, .treebox { display: flex; flex-direction: column; overflow: hidden; background: #fff; border: 1px solid #a0a0a0; }
.treebox { border-color: #828790; }

.btns { display: flex; }
.btns button { height: 16px; border: 1px solid #adadad; background: #e1e1e1; line-height: 13px; }
.g-types { padding-right: 1px; }
.types-btns { gap: 14px; padding: 7px 5px 6px 4px; }
.types-btns button, .div-btns button, .feat-btns button { width: 38px; }

.tree { flex: 1; padding-top: 2px; }
.tree li { display: flex; align-items: center; height: 10px; white-space: nowrap; line-height: 10px; background: repeating-linear-gradient(#aaa 0 1px, transparent 1px 2px) 9px 0 / 1px 100% no-repeat, repeating-linear-gradient(90deg, #aaa 0 1px, transparent 1px 2px) 13px 5px / 4px 1px no-repeat; }
.tree li:nth-child(4n) { height: 11px; }
.tree li svg { width: 7px; height: 7px; margin: 0 4px 0 6px; }
.tree li.leaf { padding-left: 30px; background: repeating-linear-gradient(#aaa 0 1px, transparent 1px 2px) 9px 0 / 1px 100% no-repeat, repeating-linear-gradient(#aaa 0 1px, transparent 1px 2px) 23px 0 / 1px 100% no-repeat, repeating-linear-gradient(90deg, #aaa 0 1px, transparent 1px 2px) 23px 5px / 6px 1px no-repeat; }
.tree li.last { background-size: 1px 5px, 4px 1px; }
.tree span { padding: 0 1px; }
.tree .on { background: #0078d7; color: #fff; }

.hbar { display: flex; align-items: center; height: 12px; padding: 0 3px; background: #f0f0f0; }
.hbar svg, .vbar svg { width: 8px; height: 8px; }
.hbar .thumb { flex: 1; height: 11px; margin: 0 4px 0 2px; background: #cdcdcd; }
.hbar .thumb.half { margin-right: 16px; }
.vbar { display: flex; flex-direction: column; align-items: center; width: 13px; padding: 2px 0; background: #f0f0f0; }
.vbar .thumb { width: 11px; height: 12px; margin: 2px 0 auto; background: #cdcdcd; }
.scroll { flex-direction: row; }
.pane { flex: 1; min-width: 0; overflow: hidden; }

.field { display: flex; align-items: center; }
.field input { flex: 1; min-width: 0; height: 16px; border: 1px solid #8a8a8a; background: #fff; }
.field.top { height: 14px; margin-bottom: 7px; padding: 0 9px 0 5px; }
.field.bottom { padding: 6px 5px 10px 8px; }
.field.top label { width: 50px; }
.field.bottom label { width: 47px; }
.sel { position: relative; flex: 1; display: flex; height: 14px; background: #e1e1e1; border: 1px solid #adadad; }
.field.bottom .sel { height: 15px; }
.sel select { appearance: none; width: 100%; padding-left: 2px; outline: 0; }
.sel::after { content: ""; position: absolute; right: 5px; top: 2px; width: 5px; height: 5px; border: solid #777; border-width: 0 1px 1px 0; transform: rotate(45deg); }
.sel.tri::after { right: 3px; top: 6px; width: 0; height: 0; border: 2px solid transparent; border-top: 3px solid #666; border-bottom: 0; transform: none; }

.grid { width: 100%; table-layout: fixed; border-collapse: separate; border-spacing: 0; white-space: nowrap; }
.grid th { height: 14px; padding: 0 0 0 4px; text-align: left; font-weight: 400; background: #fff; border-right: 1px solid #e0e0e0; border-bottom: 1px solid #a0a0a0; }
.grid td { height: 17px; padding: 0 0 0 2px; border-right: 1px solid #a0a0a0; border-bottom: 1px solid #a0a0a0; overflow: hidden; }
.grid tr:nth-child(5n) td { height: 16px; }
.grid .c, .grid .u { font: 8px/10px "Liberation Sans", sans-serif; padding-left: 1px; }
.grid .r { text-align: right; padding-right: 2px; }
.grid .g td { background: #c0c0c0; }
.grid .on td, .grid .g .cur, .grid .cur { background: #0078d7; color: #fff; }
.clip { height: 15px; overflow: hidden; }
.w7 { width: 7px; } .w19 { width: 19px; } .w26 { width: 26px; } .w27 { width: 27px; } .w29 { width: 29px; } .w30 { width: 30px; } .w36 { width: 36px; }
.w44 { width: 44px; } .w46 { width: 46px; } .w48 { width: 48px; } .w57 { width: 57px; } .w59 { width: 59px; } .w65 { width: 65px; } .w69 { width: 69px; }
.w71 { width: 71px; } .w73 { width: 73px; } .w78 { width: 78px; } .w91 { width: 91px; } .w110 { width: 110px; } .w113 { width: 113px; } .w117 { width: 117px; }

.g-list { padding: 2px 1px 0 2px; }
.g-items { margin-left: -3px; padding: 3px 1px 2px 2px; }
.items { flex: 0 1 283px; margin-bottom: 4px; overflow: hidden; border-top: 2px solid #808080; border-left: 1px solid #808080; background: #fff; }
.lower { flex: 1; min-height: 0; display: flex; flex-direction: column; padding: 4px 2px 3px 0; border-top: 2px solid #808080; border-left: 1px solid #808080; }
.calls { gap: 6px; padding-left: 296px; margin-bottom: 7px; }
.calls button { width: 53px; }
.tabs { display: flex; }
.tab { width: 55px; height: 15px; background: #fff; line-height: 15px; }
.page { flex: 1; min-height: 0; display: grid; grid-template-columns: 94px 215px minmax(0, 1fr) 185px; grid-template-rows: minmax(0, 1fr); gap: 10px; padding: 4px 8px 4px 7px; background: #fff; border: 1px solid #dcdcdc; }
.col { display: flex; flex-direction: column; min-height: 0; min-width: 0; }
.mid { gap: 9px; }
.g-div { padding: 1px; }
.rows li { height: 17px; padding-left: 2px; line-height: 16px; border-bottom: 1px solid #a0a0a0; }
.rows li:nth-child(5n) { height: 16px; }
.rows .on { background: #b8cfea; color: #fff; }
.div-btns { gap: 8px; padding: 5px 0 1px 3px; }
.radios { display: flex; gap: 10px; height: 14px; padding-left: 3px; }
.radios label { display: flex; align-items: center; gap: 2px; }
.radios input { appearance: none; width: 11px; height: 11px; border: 1px solid #444; border-radius: 50%; background: #fff; }
.radios input:checked { background: radial-gradient(#333 0 2px, #fff 4px); }
.g-bill { padding: 1px 2px; }
.g-bill .find { padding: 4px 4px 1px 8px; }
.find label { width: 34px; }
.g-quota { height: 84px; padding: 1px; }
.g-feat { padding: 1px 1px 0; }
.feat-btns { justify-content: flex-end; gap: 5px; padding: 4px 3px 0; }
.g-add { padding: 1px 2px 2px 3px; }
.g-add .treebox { margin-top: 2px; }
.g-add .find { padding: 3px 2px 1px 10px; }

/* spreadsheet window */
.excel { position: absolute; left: 720px; right: 0; top: -1px; height: 607px; display: flex; flex-direction: column; border: 1px solid #217346; border-top: 2px solid #8b8b8b; border-left-color: #86ad96; background: #e6e6e6; }
.xtitle, .xtabs { display: flex; align-items: center; background: #217346; color: #fff; }
.xtitle { height: 26px; }
.quick { flex: 1; display: flex; align-items: center; gap: 6px; padding-left: 15px; }
.quick .undo { margin-left: 4px; }
.winbtns { flex: 1; display: flex; justify-content: flex-end; gap: 24px; padding-right: 12px; }
.winbtns svg { width: 11px; height: 11px; }
.xtabs { height: 24px; }
.xtabs button { height: 24px; padding: 0 10px; line-height: 22px; }
.xtabs .file { padding: 0 14px 0 12px; }
.xtabs .on { background: #f3f3f3; color: #217346; }
.xtabs .search, .xtabs .share { display: flex; align-items: center; gap: 4px; }
.xtabs .share { margin-left: auto; padding-right: 18px; }

.ribbon { display: flex; height: 71px; background: #f3f3f3; border-bottom: 1px solid #d2d2d2; color: #333; }
.rg { display: flex; flex-direction: column; border-right: 1px solid #d8d8d8; margin: 2px 0 4px; }
.tools { flex: 1; min-height: 0; }
.rlabel { position: relative; height: 11px; text-align: center; line-height: 12px; }
.rlabel svg { position: absolute; right: 3px; bottom: 0; width: 6px; height: 6px; }
.rg-clip { width: 64px; } .rg-clip .rlabel { padding-right: 12px; }
.rg-font { width: 186px; } .rg-font .rlabel { padding-right: 12px; }
.rg-align { width: 124px; } .rg-align .rlabel { padding-right: 12px; }
.rg-num { width: 65px; } .rg-num .rlabel { padding-right: 12px; }
.rg-style { width: 89px; } .rg-cells { width: 56px; } .rg-edit { width: 57px; }
.rg-end { flex: 1; display: flex; justify-content: flex-end; align-items: flex-end; padding: 0 7px 2px; }
.car { flex: none; border: 2px solid transparent; border-top: 3px solid #666; border-bottom: 0; }
.car.dim { border-top-color: #bbb; }
.ico { display: flex; align-items: center; gap: 6px; }
.ico svg { flex: none; }
.clip-tools { display: flex; gap: 6px; padding-left: 8px; }
.paste { display: flex; flex-direction: column; align-items: center; padding-top: 3px; gap: 3px; color: #aaa; }
.stack { display: flex; flex-direction: column; gap: 5px; padding-top: 2px; }
.two { display: flex; flex-direction: column; gap: 4px; padding-top: 5px; }
.trow { display: flex; align-items: center; height: 19px; }
.trow b { font: bold 10px/12px "Liberation Sans", sans-serif; color: #444; }
.tri { flex: none; height: 17px; background: #fff; border-color: #c6c6c6; }
.rg-font .trow { padding-left: 3px; }
.fname { width: 117px; } .fsize { width: 30px; border-left: 0; }
.trow .big, .trow .small { display: flex; margin-left: 5px; font-weight: 400; font-size: 12px; }
.trow .small { font-size: 10px; margin-left: 6px; }
.rg-font .fonts2 { gap: 6px; padding-left: 7px; }
.fonts2 b { width: 9px; text-align: center; }
.fonts2 .it { font-style: italic; font-family: "Liberation Serif", serif; }
.fonts2 .un { text-decoration: underline; }
.fonts2 .ico { gap: 5px; }
.fonts2 .vs { margin: 0; }
.vs { width: 1px; height: 16px; margin: 0 3px; background: #d8d8d8; }
.acol { width: 12px; height: 13px; border-bottom: 3px solid #f00; font: bold 11px/10px "Liberation Sans", sans-serif; text-align: center; }
.pin { display: flex; flex-direction: column; width: 12px; font: 7px/7px "Liberation Sans", "Noto Sans CJK SC", sans-serif; }
.pin .wen { text-align: center; color: #2f6fb7; }
.al { gap: 1px; padding-left: 3px; }
.al .vs { margin: 0 3px 0 2px; }
.tb { display: flex; align-items: center; justify-content: center; width: 16px; height: 18px; }
.tb svg, .turn svg { width: 12px; height: 12px; }
.tb.on { background: #c8c8c8; }
.tb.wide { width: 24px; gap: 4px; }
.turn { gap: 4px; width: 33px; padding-left: 3px; }
.rg-num .tools { padding-left: 4px; }
.nfmt { width: 57px; }
.n2 svg { width: 12px; height: 12px; }
.n2 { height: 18px; gap: 9px; }
.n2 .ico { gap: 4px; padding-left: 2px; }
.n2 .pct { font-size: 11px; }
.n3 { gap: 5px; height: 16px; padding-left: 2px; }
.dec { display: flex; flex-direction: column; font: 6px/7px "Liberation Sans", sans-serif; }
.dec em { display: flex; justify-content: flex-end; }
.dec i { color: #2f6fb7; }
.lines { display: flex; flex-direction: column; gap: 1px; padding: 1px 0 0 5px; }
.lines button, .pair { display: flex; align-items: center; gap: 3px; height: 16px; }
.lines svg { width: 12px; height: 12px; }
.lines .far { margin-left: 5px; }
.pair .ico { gap: 5px; width: 21px; }
.pair { gap: 6px; }
.pair .ico + .ico { gap: 2px; }
.lines .fun { width: 6px; height: 6px; }
.az { display: flex; flex-direction: column; font: bold 7px/7px "Liberation Sans", sans-serif; color: #3b78bd; }
.az em + em { color: #8a4aa8; }

.fbar { display: flex; align-items: center; padding: 7px 3px 8px; color: #444; }
.namebox, .fbtns, .ftext { display: flex; align-items: center; height: 21px; background: #fff; border: 1px solid #d0d0d0; }
.namebox { justify-content: space-between; width: 77px; padding: 0 4px; font-size: 10px; }
.dots { width: 22px; text-align: center; color: #888; }
.fbtns { width: 82px; justify-content: space-between; padding: 0 9px; }
.fbtns svg { width: 10px; height: 10px; }
.fbtns i { font: italic bold 10px/12px "Liberation Serif", serif; }
.fbtns small { font-size: 8px; }
.ftext { flex: 1; justify-content: space-between; margin-left: 2px; padding: 0 2px 0 7px; font-size: 11px; }

.sheet { flex: 1; min-height: 0; display: flex; }
.cells { flex: 1; min-width: 0; overflow: hidden; border-right: 1px solid #ababab; }
.xs { width: 100%; table-layout: fixed; border-collapse: separate; border-spacing: 0; background: #fff; color: #000; line-height: 11px; }
.xs th { padding: 0; background: #e6e6e6; border: solid #c0c0c0; border-width: 0 1px 1px 0; font: 10px/10px "Liberation Sans", sans-serif; color: #333; vertical-align: bottom; }
.xs thead th { height: 12px; line-height: 11px; }
.xs .s { background: #d2d2d2; color: #217346; }
.xs thead .s { border-bottom-color: #217346; }
.xs .corner { background: linear-gradient(135deg, #e6e6e6 0 70%, #b4b4b4 71%); }
.xs td { position: relative; padding: 0; border: solid #dcdcdc; border-width: 0 1px 1px 0; text-align: center; white-space: nowrap; overflow: hidden; }
.xs .k { border-color: #222; }
.xs .k0 { border-bottom-color: #222; }
.xs .h { font-size: 10px; line-height: 10px; }
.xs .n { font: 8px/11px "Liberation Sans", sans-serif; }
.xs .l { text-align: left; padding-left: 1px; }
.xs .r { text-align: right; padding-right: 1px; }
.xs .t { background: linear-gradient(135deg, #0a7a0a 3px, transparent 3px); }
.xs .title { border: 2px solid #217346; border-top-width: 1px; font-size: 20px; line-height: 24px; font-weight: 300; overflow: visible; }
.handle { position: absolute; right: -3px; bottom: -3px; width: 5px; height: 5px; background: #217346; border: 1px solid #fff; }
.h16 { height: 16px; } .h17 { height: 17px; } .h19 { height: 19px; } .h20 { height: 20px; } .h27 { height: 27px; } .h28 { height: 28px; } .h29 { height: 29px; } .h40 { height: 40px; } .h51 { height: 51px; }

.xv { width: 14px; display: flex; flex-direction: column; align-items: center; padding: 2px 0 0 1px; background: #dcdcdc; }
.ab { display: flex; align-items: center; justify-content: center; width: 11px; height: 11px; background: #fff; border: 1px solid #ababab; }
.ab.end { margin-top: auto; }
.xv .xthumb { width: 11px; height: 90px; margin-top: 1px; background: #fff; border: 1px solid #ababab; }
.up, .dn { border: 2px solid transparent; }
.up { border-bottom: 3px solid #666; border-top: 0; } .dn { border-top: 3px solid #666; border-bottom: 0; }
.lt, .rt { border: 3px solid transparent; }
.lt { border-right-color: #666; border-left: 0; } .rt { border-left-color: #666; border-right: 0; }
.xsheets { display: flex; align-items: center; height: 20px; border-top: 1px solid #ababab; font-size: 10px; color: #555; }
.nav { display: flex; width: 75px; gap: 19px; padding-left: 20px; }
.nav .lt { border-right-color: #bbb; } .nav .rt { border-left-color: #217346; }
.xsheets button { padding: 0 7px; border-left: 1px solid #ababab; line-height: 14px; }
.xsheets .on { width: 32px; height: 18px; margin-bottom: 1px; border: 0; border-bottom: 2px solid #217346; background: #fff; color: #217346; text-align: left; overflow: hidden; }
.more { width: 24px; text-align: center; color: #217346; }
.xh { flex: 1; display: flex; align-items: center; height: 12px; margin-right: 14px; background: #dcdcdc; }
.xh .xthumb { width: 13px; height: 11px; margin-left: 1px; background: #fff; border: 1px solid #ababab; }
.xh .ab.end { margin: 0 0 0 auto; }
.xstatus { display: flex; align-items: center; height: 17px; border-top: 1px solid #d0d0d0; background: #f3f3f3; color: #333; }
.ready { flex: 1; padding-left: 5px; }
.xstatus button { display: flex; align-items: center; justify-content: center; width: 28px; height: 16px; }
.xstatus button svg { width: 11px; height: 11px; }
.xstatus .on { background: #c8c8c8; }
.pm { width: 10px; text-align: center; font-size: 10px; }
.xstatus input { appearance: none; width: 76px; height: 10px; background: linear-gradient(#999, #999) 0 5px / 100% 1px no-repeat; }
.xstatus input::-webkit-slider-thumb { appearance: none; width: 4px; height: 9px; background: #666; }
.pc { width: 45px; padding-left: 7px; font-size: 10px; }
```
